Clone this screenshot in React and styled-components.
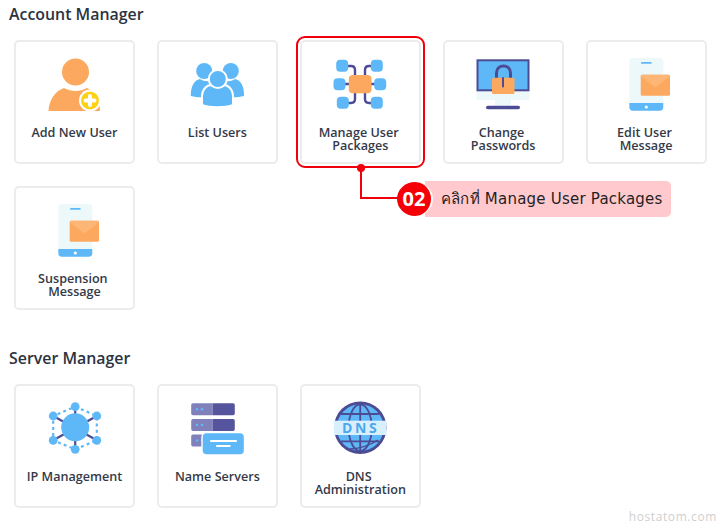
import React from 'react'
import styled, {createGlobalStyle} from 'styled-components'

const GlobalStyle = createGlobalStyle`
html, body {
  margin: 0;
  padding: 0;
  background: #fff;
}
`

const Page = styled.div`
position: relative;
width: 720px;
height: 524px;
overflow: hidden;
font-family: "Open Sans", sans-serif;
`

const Section = styled.section`
margin-bottom: 34px;
`

const Heading = styled.h2`
margin: 0;
padding-left: 9px;
height: 28px;
line-height: 28px;
font-size: 15.9px;
font-weight: 600;
color: #2c3340;
`

const Grid = styled.div`
display: grid;
grid-template-columns: repeat(5, 121px);
gap: 22px 21.9px;
padding: 12px 14px 0;
`

const Card = styled.div`
position: relative;
box-sizing: border-box;
height: 124px;
display: flex;
flex-direction: column;
align-items: center;
padding-top: 10px;
border: 2px solid #ececec;
border-radius: 5px;
background: #fff;

${p => p.$active && `
&::after {
  content: '';
  position: absolute;
  inset: -6px;
  border: 2px solid #f0000a;
  border-radius: 9px;
}
`}
`

const Icon = styled.svg`
display: block;
width: 64px;
height: 64px;
flex: none;
`

const Label = styled.div`
margin-top: 10px;
width: 100px;
text-align: center;
font-size: 12.6px;
line-height: 13px;
font-weight: 600;
color: #343a48;
`

const Elbow = styled.div`
position: absolute;
left: 360px;
top: 168px;
width: 40px;
height: 29px;
border-left: 2px solid #f0000a;
border-bottom: 2px solid #f0000a;
`

const Dot = styled.div`
position: absolute;
left: 357px;
top: 164px;
width: 8px;
height: 8px;
border-radius: 50%;
background: #f0000a;
`

const Callout = styled.div`
position: absolute;
left: 397px;
top: 181px;
display: flex;
align-items: center;
`

const Badge = styled.div`
position: relative;
z-index: 1;
box-sizing: content-box;
width: 34px;
height: 34px;
border-radius: 50%;
border-right: 2px solid #fff;
background: #f50006;
color: #fff;
font-size: 20px;
font-weight: 700;
line-height: 34px;
text-align: center;
`

const Pill = styled.div`
margin-left: -8px;
width: 246px;
height: 36px;
box-sizing: border-box;
padding-left: 16px;
border-radius: 0 5px 5px 0;
background: #ffc9ce;
color: #1f1f24;
font-family: "DejaVu Sans", "Noto Sans", sans-serif;
font-size: 15px;
letter-spacing: 0.22px;
line-height: 36px;
white-space: nowrap;
`

const Watermark = styled.div`
position: absolute;
right: 3px;
bottom: 0;
color: #cfcfcf;
font-size: 12px;
line-height: 14px;
letter-spacing: 0.6px;
`

const BLUE = '#5eb8f8'
const PURPLE = '#4c4b94'
const ORANGE = '#fca85e'

const AddUserIcon = () => (
  <Icon viewBox="0 0 64 64">
    <circle cx="32.5" cy="20" r="13.5" fill={ORANGE} />
    <path d="M5.5 59C6 48 12 39 21 36C28 40 37 40 44 36C52 39 57 48 57 59Z" fill={ORANGE} />
    <circle cx="47" cy="48.5" r="11" fill="#fff" />
    <circle cx="47" cy="48.5" r="9" fill="#fcd116" />
    <path d="M47 44V53M42.5 48.5H51.5" stroke="#fff" strokeWidth="4" strokeLinecap="round" />
  </Icon>
)

const UsersIcon = () => (
  <Icon viewBox="0 0 64 64">
    <circle cx="19.2" cy="19" r="8" fill={BLUE} />
    <circle cx="45.8" cy="19" r="8" fill={BLUE} />
    <path d="M5.8 44C5.5 35 9 28 15 27C20 30 24 30 30 27H36C41 30 45 30 50 27C56 28 59.5 35 59 44C52 46 46 45 32 45C20 45 12 46 5.8 44Z" fill={BLUE} />
    <path d="M17 53V45C17 37 22 33 26 33C30 35 35 35 39 33C43 33 48 37 48 45V53C40 56 25 56 17 53Z" fill={BLUE} stroke="#fff" strokeWidth="2" />
    <circle cx="32.8" cy="27" r="9" fill={BLUE} stroke="#fff" strokeWidth="2" />
  </Icon>
)

const PackagesIcon = () => (
  <Icon viewBox="0 0 64 64">
    <path d="M18 14H23Q27 14 27 18V24M46 14H41Q37 14 37 18V24M14 32H22M50 32H42M18 51H23Q27 51 27 47V40M46 51H41Q37 51 37 47V40" fill="none" stroke={PURPLE} strokeWidth="2.4" />
    <rect x="8.2" y="7.7" width="12" height="12" rx="4" fill={BLUE} />
    <rect x="42.8" y="7.7" width="12" height="12" rx="4" fill={BLUE} />
    <rect x="5.5" y="26.3" width="12" height="12" rx="4" fill={BLUE} />
    <rect x="46.2" y="26.3" width="12" height="12" rx="4" fill={BLUE} />
    <rect x="8.8" y="44.7" width="12" height="12" rx="4" fill={BLUE} />
    <rect x="42.8" y="44.7" width="12" height="12" rx="4" fill={BLUE} />
    <rect x="20.8" y="23" width="22.7" height="18.3" rx="4" fill={ORANGE} />
  </Icon>
)

const MonitorIcon = () => (
  <Icon viewBox="0 0 64 64">
    <rect x="5.5" y="39" width="53" height="9" fill="#edf8fb" />
    <rect x="24" y="48" width="16" height="5.5" fill="#edf8fb" />
    <rect x="15" y="53.7" width="34" height="3.6" rx="1.8" fill={PURPLE} />
    <rect x="6.5" y="8.3" width="51" height="30" fill={BLUE} stroke={PURPLE} strokeWidth="2" />
    <path d="M25.5 26V21C25.5 11.5 39.5 11.5 39.5 21V26" fill="none" stroke={PURPLE} strokeWidth="3" />
    <rect x="21" y="25.7" width="22.5" height="16.3" rx="1.5" fill={ORANGE} />
    <path d="M32 26V34.5" stroke={PURPLE} strokeWidth="2" strokeLinecap="round" />
  </Icon>
)

const PhoneMailIcon = () => (
  <Icon viewBox="0 0 64 64">
    <path d="M15.3 51V9.5Q15.3 6 18.8 6H45.8Q49.3 6 49.3 9.5V51Z" fill="#edf8fb" />
    <path d="M15.3 51H49.3V55Q49.3 58.7 45.8 58.7H18.8Q15.3 58.7 15.3 55Z" fill={BLUE} />
    <rect x="27" y="10" width="10.7" height="1.8" rx="0.9" fill={BLUE} />
    <circle cx="32.3" cy="55" r="1.6" fill="#fff" />
    <rect x="26.7" y="22.7" width="29.3" height="21" rx="1.5" fill={ORANGE} />
    <path d="M26.7 24.2Q26.7 22.7 28.2 22.7H54.5Q56 22.7 56 24.2L41.4 35.5Z" fill="#feb676" />
  </Icon>
)

const NetworkIcon = () => (
  <Icon viewBox="0 0 64 64">
    <path d="M32.2 10.7L53.8 20V44.3L32.2 53.3L10.2 44.3V20Z" fill="none" stroke={BLUE} strokeWidth="2.2" strokeDasharray="3 3.2" />
    <path d="M32.2 10.7V53.3M10.2 20L53.8 44.3M53.8 20L10.2 44.3" stroke={PURPLE} strokeWidth="2.2" />
    <circle cx="32.2" cy="31.3" r="14" fill={BLUE} />
    <circle cx="32.2" cy="10.7" r="4.4" fill={BLUE} />
    <circle cx="32.2" cy="53.3" r="4.4" fill={BLUE} />
    <circle cx="10.2" cy="20" r="4.4" fill={BLUE} />
    <circle cx="53.8" cy="20" r="4.4" fill={BLUE} />
    <circle cx="10.2" cy="44.3" r="4.4" fill={BLUE} />
    <circle cx="53.8" cy="44.3" r="4.4" fill={BLUE} />
  </Icon>
)

const ServerRow = ({y}) => (
  <>
    <path d={`M27.8 ${y}H8Q6.2 ${y} 6.2 ${y + 2}V${y + 10}Q6.2 ${y + 12} 8 ${y + 12}H27.8Z`} fill="#8080ba" />
    <path d={`M27.8 ${y}H48Q49.8 ${y} 49.8 ${y + 2}V${y + 10}Q49.8 ${y + 12} 48 ${y + 12}H27.8Z`} fill="#55549d" />
    <circle cx="12" cy={y + 6} r="1.3" fill={BLUE} />
    <circle cx="17" cy={y + 6} r="1.3" fill={BLUE} />
  </>
)

const ServersIcon = () => (
  <Icon viewBox="0 0 64 64">
    <ServerRow y={7.3} />
    <ServerRow y={23} />
    <ServerRow y={38.5} />
    <rect x="17" y="36.5" width="42.5" height="22.5" rx="4.5" fill={BLUE} stroke="#fff" strokeWidth="1.4" />
    <rect x="25.2" y="44" width="26.6" height="2" fill="#fff" />
    <rect x="31.2" y="49" width="14.3" height="2" fill="#fff" />
  </Icon>
)

const DnsIcon = () => (
  <Icon viewBox="0 0 64 64">
    <circle cx="32.2" cy="31.7" r="26.3" fill={PURPLE} />
    <circle cx="32.2" cy="31.7" r="23.4" fill={BLUE} />
    <path d="M32.2 8.3V55M13 18H51.4M13 45.4H51.4" stroke={PURPLE} strokeWidth="1.8" />
    <ellipse cx="32.2" cy="31.7" rx="11.5" ry="23.4" fill="none" stroke={PURPLE} strokeWidth="1.8" />
    <path d="M22 53Q38 52 50 44" fill="none" stroke={PURPLE} strokeWidth="1.4" />
    <rect x="6" y="24.7" width="52.4" height="14.3" fill="#d8effd" />
    <text x="32.6" y="36.7" textAnchor="middle" fontFamily="Open Sans, sans-serif" fontSize="14" fontWeight="700" letterSpacing="2.6" fill="#4aa8ee">DNS</text>
  </Icon>
)

const Tile = ({icon, label, active}) => (
  <Card $active={active}>
    {icon}
    <Label>{label}</Label>
  </Card>
)

export default function App() {
  return (
    <Page>
      <GlobalStyle />
      <Section>
        <Heading>Account Manager</Heading>
        <Grid>
          <Tile icon={<AddUserIcon />} label="Add New User" />
          <Tile icon={<UsersIcon />} label="List Users" />
          <Tile icon={<PackagesIcon />} label={'Manage User\u00a0 Packages'} active />
          <Tile icon={<MonitorIcon />} label={'Change\u00a0 Passwords'} />
          <Tile icon={<PhoneMailIcon />} label={'Edit User\u00a0 Message'} />
          <Tile icon={<PhoneMailIcon />} label={'Suspension\u00a0 Message'} />
        </Grid>
      </Section>
      <Section>
        <Heading>Server Manager</Heading>
        <Grid>
          <Tile icon={<NetworkIcon />} label="IP Management" />
          <Tile icon={<ServersIcon />} label="Name Servers" />
          <Tile icon={<DnsIcon />} label={'DNS\u00a0 Administration'} />
        </Grid>
      </Section>
      <Elbow />
      <Dot />
      <Callout>
        <Badge>02</Badge>
        <Pill>คลิกที่ Manage User Packages</Pill>
      </Callout>
      <Watermark>hostatom.com</Watermark>
    </Page>
  )
}
